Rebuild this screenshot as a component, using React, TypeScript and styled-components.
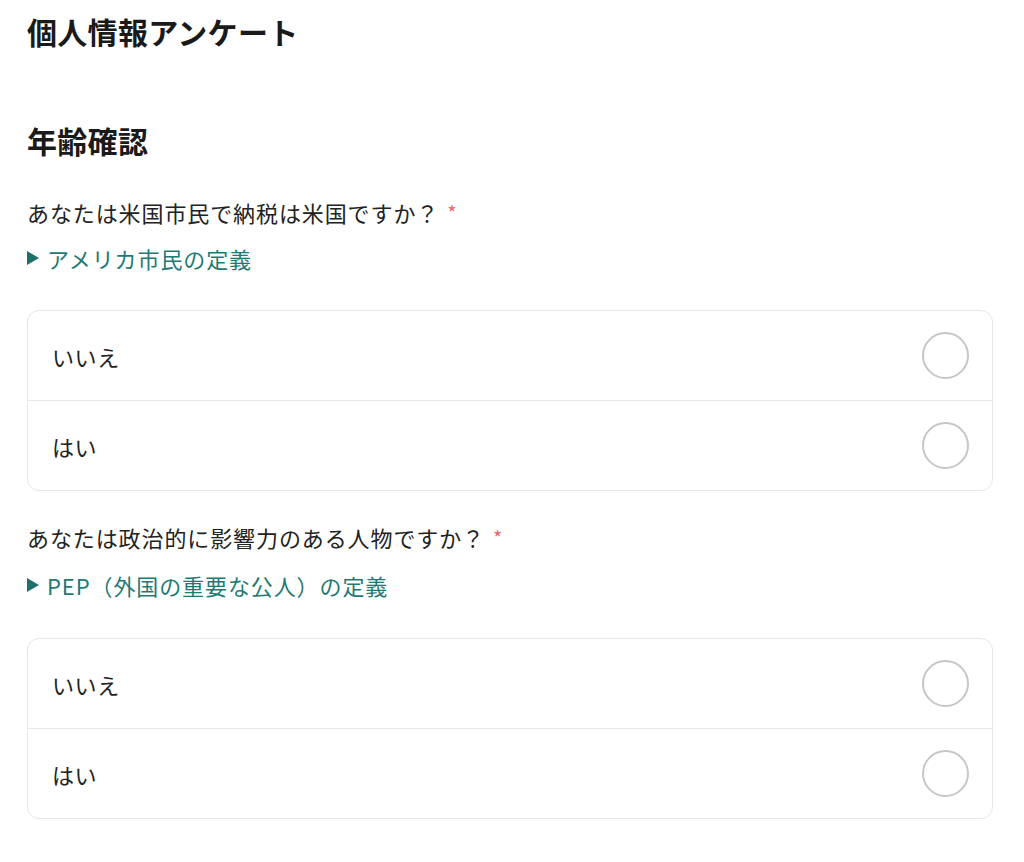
import React from "react";
import styled, { createGlobalStyle } from "styled-components";

const GlobalStyle = createGlobalStyle`
  html, body { margin: 0; padding: 0; background: #ffffff; }
  body {
    font-family: "Noto Sans CJK JP", "Noto Sans", sans-serif;
    color: #222222;
  }
  * { box-sizing: border-box; }
`;

const Page = styled.main`
  display: flex;
  flex-direction: column;
  padding: 11px 31px 40px 27px;
`;

const Title = styled.h1`
  margin: 0;
  font-size: 30px;
  line-height: 40px;
  font-weight: 700;
  letter-spacing: 0.3px;
  color: #1a1a1a;
`;

const SectionTitle = styled.h2`
  margin: 69px 0 0;
  font-size: 30px;
  line-height: 40px;
  font-weight: 700;
  letter-spacing: 0.3px;
  color: #1a1a1a;
`;

const Question = styled.div<{ $top: number }>`
  margin-top: ${(p) => p.$top}px;
  display: flex;
  flex-direction: column;
`;

const Label = styled.div`
  font-size: 22px;
  line-height: 32px;
  color: #222222;
  letter-spacing: 0.9px;
`;

const Required = styled.span`
  color: #e46a6e;
  margin-left: 8px;
  font-size: 20px;
  vertical-align: 1px;
`;

const Disclosure = styled.button<{ $gap: number }>`
  margin-top: ${(p) => p.$gap}px;
  align-self: flex-start;
  display: flex;
  align-items: center;
  gap: 8px;
  padding: 0;
  border: none;
  background: none;
  font-family: inherit;
  font-size: 22px;
  line-height: 32px;
  color: #1f7a74;
  cursor: pointer;
  letter-spacing: 0.9px;
`;

const Triangle = styled.span`
  flex: none;
  width: 0;
  height: 0;
  border-top: 7px solid transparent;
  border-bottom: 7px solid transparent;
  border-left: 12px solid #1f6f6a;
`;

const Options = styled.div<{ $gap: number }>`
  margin-top: ${(p) => p.$gap}px;
  border: 1px solid #e6e6e6;
  border-radius: 12px;
  display: flex;
  flex-direction: column;
  overflow: hidden;
`;

const Option = styled.label`
  height: 89px;
  display: flex;
  align-items: center;
  justify-content: space-between;
  padding: 0 23px 0 24px;
  font-size: 22px;
  letter-spacing: 0.6px;
  color: #222222;
  cursor: pointer;
  & + & {
    border-top: 1px solid #e6e6e6;
    height: 90px;
  }
`;

const Radio = styled.span`
  width: 47px;
  height: 47px;
  border-radius: 50%;
  border: 2px solid #c6c6c6;
  background: #fff;
`;

type Q = { label: string; link: string; top: number; linkGap: number; cardGap: number };

const questions: Q[] = [
  { label: "あなたは米国市民で納税は米国ですか？", link: "アメリカ市民の定義", top: 36, linkGap: 13, cardGap: 36 },
  { label: "あなたは政治的に影響力のある人物ですか？", link: "PEP（外国の重要な公人）の定義", top: 30, linkGap: 15, cardGap: 37 },
];

export default function App() {
  return (
    <>
      <GlobalStyle />
      <Page>
        <Title>個人情報アンケート</Title>
        <SectionTitle>年齢確認</SectionTitle>
        {questions.map((q) => (
          <Question key={q.label} $top={q.top}>
            <Label>
              {q.label}
              <Required>*</Required>
            </Label>
            <Disclosure type="button" $gap={q.linkGap}>
              <Triangle />
              {q.link}
            </Disclosure>
            <Options $gap={q.cardGap}>
              <Option>
                いいえ
                <Radio />
              </Option>
              <Option>
                はい
                <Radio />
              </Option>
            </Options>
          </Question>
        ))}
      </Page>
    </>
  );
}
